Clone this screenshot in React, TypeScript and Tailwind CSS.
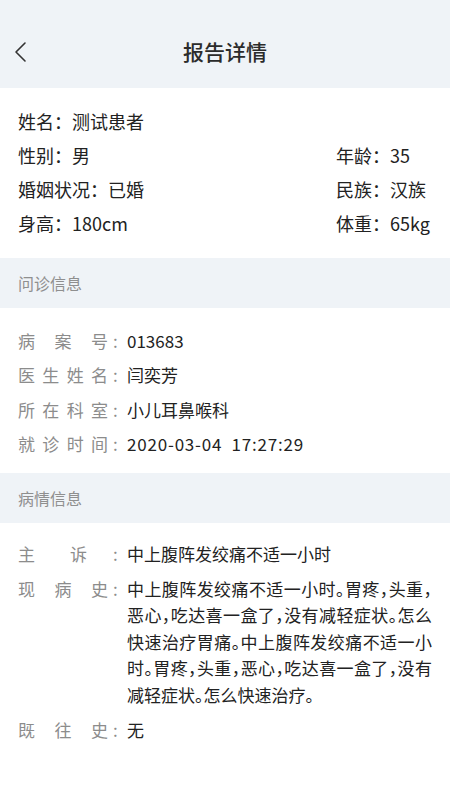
import React from 'react';

const font = { fontFamily: '"Noto Sans CJK SC", "Noto Sans", sans-serif' };

const basic = [
  [{ k: '姓名', v: '测试患者' }, null],
  [{ k: '性别', v: '男' }, { k: '年龄', v: '35' }],
  [{ k: '婚姻状况', v: '已婚' }, { k: '民族', v: '汉族' }],
  [{ k: '身高', v: '180cm' }, { k: '体重', v: '65kg' }],
];

const visit = [
  { k: ['病', '案', '号'], v: '013683', wide: false },
  { k: ['医', '生', '姓', '名'], v: '闫奕芳', wide: false },
  { k: ['所', '在', '科', '室'], v: '小儿耳鼻喉科', wide: false },
  { k: ['就', '诊', '时', '间'], v: '2020-03-04\u00a0\u00a017:27:29', wide: true },
];

const history = [
  '中上腹阵发绞痛不适一小时。胃疼，头重，',
  '恶心，吃达喜一盒了，没有减轻症状。怎么',
  '快速治疗胃痛。中上腹阵发绞痛不适一小',
  '时。胃疼，头重，恶心，吃达喜一盒了，没有',
  '减轻症状。怎么快速治疗。',
];

function Label({ chars }: { chars: string[] }) {
  return (
    <div className="flex shrink-0 items-start">
      <span className="flex w-[90px] justify-between text-[#8c8c8c]">
        {chars.map((c, i) => (
          <span key={i}>{c}</span>
        ))}
      </span>
      <span className="w-[19px] pl-[5px] text-[#8c8c8c]">:</span>
    </div>
  );
}

function SectionTitle({ children }: { children: React.ReactNode }) {
  return (
    <div className="flex h-[50px] items-center bg-[#eff3f7] px-[18px] text-[16px] text-[#8f8f8f]">
      {children}
    </div>
  );
}

export default function App() {
  return (
    <div className="min-h-[800px] w-[450px] bg-white text-[#222]" style={font}>
      {/* Nav */}
      <div className="relative flex h-[88px] items-center justify-center bg-[#eff3f7] pt-[16px]">
        <svg
          className="absolute left-[13px] top-[41px]"
          width="18"
          height="22"
          viewBox="0 0 18 22"
          fill="none"
          stroke="#333"
          strokeWidth="1.6"
          strokeLinecap="round"
          strokeLinejoin="round"
        >
          <polyline points="12,2 3,11 12,20" />
        </svg>
        <span className="text-[21px] font-medium text-[#2b2b2b]">报告详情</span>
      </div>

      {/* Basic info */}
      <div className="px-[18px] pb-[18px] pt-[16px] text-[18px]">
        {basic.map((row, i) => (
          <div key={i} className="flex h-[34px] items-center justify-between">
            <span>
              {row[0]!.k}：{row[0]!.v}
            </span>
            {row[1] && (
              <span className="w-[96px] whitespace-nowrap">
                {row[1].k}：{row[1].v}
              </span>
            )}
          </div>
        ))}
      </div>

      <SectionTitle>问诊信息</SectionTitle>

      <div className="px-[18px] pb-[12px] pt-[15px] text-[17px]">
        {visit.map((r, i) => (
          <div key={i} className="flex h-[34.5px] items-center">
            <Label chars={r.k} />
            <span className={r.wide ? 'tracking-[0.8px] text-[#222]' : 'text-[#222]'}>{r.v}</span>
          </div>
        ))}
      </div>

      <SectionTitle>病情信息</SectionTitle>

      <div className="flex flex-col gap-[8.5px] px-[18px] pt-[17.5px] text-[17px] leading-[26.5px]">
        <div className="flex">
          <div className="flex shrink-0 items-start">
            <span className="flex w-[90px] text-[#8c8c8c]">
              <span>主</span>
              <span className="ml-[35px]">诉</span>
            </span>
            <span className="w-[19px] pl-[5px] text-[#8c8c8c]">:</span>
          </div>
          <span>中上腹阵发绞痛不适一小时</span>
        </div>
        <div className="flex">
          <Label chars={['现', '病', '史']} />
          <div className="flex w-[305px] flex-col [font-feature-settings:'halt']">
            {history.map((l, i) => (
              <span
                key={i}
                className={
                  i < history.length - 1
                    ? 'block whitespace-nowrap text-justify [text-align-last:justify]'
                    : 'block whitespace-nowrap'
                }
              >
                {l}
              </span>
            ))}
          </div>
        </div>
        <div className="flex">
          <Label chars={['既', '往', '史']} />
          <span>无</span>
        </div>
      </div>
    </div>
  );
}
